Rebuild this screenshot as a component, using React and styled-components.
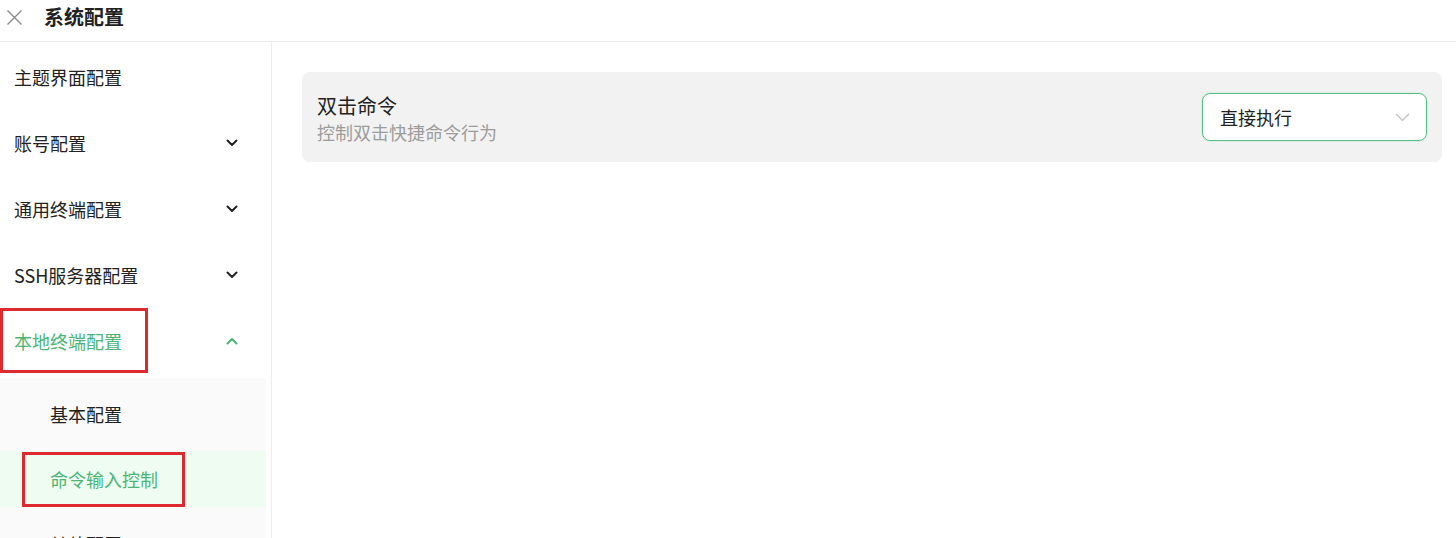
import React from "react";
import styled, { createGlobalStyle } from "styled-components";

const Global = createGlobalStyle`
  html, body { margin: 0; padding: 0; background: #fff; }
  body {
    font-family: "Noto Sans CJK SC", "Noto Sans", sans-serif;
    color: #222;
    overflow: hidden;
  }
`;

const Page = styled.div`
  width: 1456px;
  height: 538px;
  display: flex;
  flex-direction: column;
  overflow: hidden;
`;

const Header = styled.header`
  flex: none;
  display: flex;
  align-items: center;
  border-bottom: 1px solid #ececec;
  padding-left: 6px;
  gap: 21px;
  padding-bottom: 7px;
  box-sizing: content-box;
  height: 34px;
`;

const CloseBtn = styled.button`
  width: 17px;
  height: 17px;
  border: 0;
  padding: 0;
  background: none;
  display: flex;
  align-items: center;
  justify-content: center;
  cursor: pointer;
`;

const Title = styled.h1`
  margin: 0;
  font-size: 20px;
  line-height: 26px;
  font-weight: 700;
  color: #222;
`;

const Body = styled.div`
  flex: 1;
  display: flex;
  min-height: 0;
`;

const Sidebar = styled.nav`
  width: 271px;
  flex: none;
  border-right: 1px solid #ececec;
  padding-top: 2px;
  overflow: hidden;
`;

const Menu = styled.ul`
  list-style: none;
  margin: 0;
  padding: 0;
  width: 266px;
`;

const MenuItem = styled.li`
  position: relative;
  height: 66px;
  display: flex;
  align-items: center;
  justify-content: space-between;
  padding: 0 28px 0 14px;
  font-size: 18px;
  line-height: 24px;
  color: ${(p) => (p.$open ? "#4cb575" : "#222")};
  cursor: pointer;
`;

const SubMenu = styled.ul`
  list-style: none;
  margin: 4px 0 0;
  padding: 8px 0 0;
  background: #fafafa;
  display: flex;
  flex-direction: column;
  gap: 9px;
  min-height: 200px;
`;

const SubItem = styled.li`
  position: relative;
  height: 56px;
  display: flex;
  align-items: center;
  padding-left: 50px;
  font-size: 18px;
  line-height: 24px;
  color: ${(p) => (p.$active ? "#4cb575" : "#222")};
  background: ${(p) => (p.$active ? "#effcf2" : "transparent")};
`;

const Mark = styled.span`
  position: absolute;
  left: ${(p) => p.$left}px;
  top: ${(p) => p.$top}px;
  width: ${(p) => p.$w}px;
  height: ${(p) => p.$h}px;
  border: 3px solid #dc2a2f;
  box-sizing: border-box;
  pointer-events: none;
`;

const Main = styled.main`
  flex: 1;
  padding: 30px 14px 0 30px;
`;

const Card = styled.section`
  height: 90px;
  box-sizing: border-box;
  background: #f2f2f2;
  border-radius: 8px;
  display: flex;
  align-items: center;
  justify-content: space-between;
  padding: 0 15px;
`;

const Texts = styled.div`
  display: flex;
  flex-direction: column;
  padding-top: 2px;
`;

const CardTitle = styled.div`
  font-size: 20px;
  line-height: 27px;
  color: #222;
`;

const CardDesc = styled.div`
  font-size: 18px;
  line-height: 26px;
  color: #9c9c9c;
`;

const Select = styled.div`
  width: 225px;
  height: 48px;
  box-sizing: border-box;
  border: 1px solid #58c084;
  border-radius: 8px;
  background: #fff;
  box-shadow: 0 0 0 1px rgba(88, 192, 132, 0.12);
  display: flex;
  align-items: center;
  justify-content: space-between;
  padding: 0 16px 0 17px;
  font-size: 18px;
  line-height: 24px;
  color: #222;
`;

const Chevron = ({ up, color = "#222" }) => (
  <svg width="12" height="8" viewBox="0 0 12 8">
    <path
      d={up ? "M1.5 6.5 L6 2 L10.5 6.5" : "M1.5 1.5 L6 6 L10.5 1.5"}
      fill="none"
      stroke={color}
      strokeWidth="2"
      strokeLinecap="round"
      strokeLinejoin="round"
    />
  </svg>
);

const ThinChevron = () => (
  <svg width="15" height="9" viewBox="0 0 15 9">
    <path d="M1 1 L7.5 7.5 L14 1" fill="none" stroke="#bdbdbd" strokeWidth="1.2" />
  </svg>
);

export default function App() {
  return (
    <Page>
      <Global />
      <Header>
        <CloseBtn aria-label="关闭">
          <svg width="17" height="17" viewBox="0 0 17 17">
            <path d="M1.5 1.5 L15.5 15.5 M15.5 1.5 L1.5 15.5" stroke="#8a8a8a" strokeWidth="1.4" />
          </svg>
        </CloseBtn>
        <Title>系统配置</Title>
      </Header>
      <Body>
        <Sidebar>
          <Menu>
            <MenuItem>主题界面配置</MenuItem>
            <MenuItem>
              账号配置
              <Chevron />
            </MenuItem>
            <MenuItem>
              通用终端配置
              <Chevron />
            </MenuItem>
            <MenuItem>
              SSH服务器配置
              <Chevron />
            </MenuItem>
            <MenuItem $open>
              本地终端配置
              <Chevron up color="#4cb575" />
              <Mark $left={0} $top={0} $w={148} $h={65} />
            </MenuItem>
            <SubMenu>
              <SubItem>基本配置</SubItem>
              <SubItem $active>
                命令输入控制
                <Mark $left={22} $top={1} $w={163} $h={55} />
              </SubItem>
              <SubItem>其他配置</SubItem>
            </SubMenu>
          </Menu>
        </Sidebar>
        <Main>
          <Card>
            <Texts>
              <CardTitle>双击命令</CardTitle>
              <CardDesc>控制双击快捷命令行为</CardDesc>
            </Texts>
            <Select>
              直接执行
              <ThinChevron />
            </Select>
          </Card>
        </Main>
      </Body>
    </Page>
  );
}
